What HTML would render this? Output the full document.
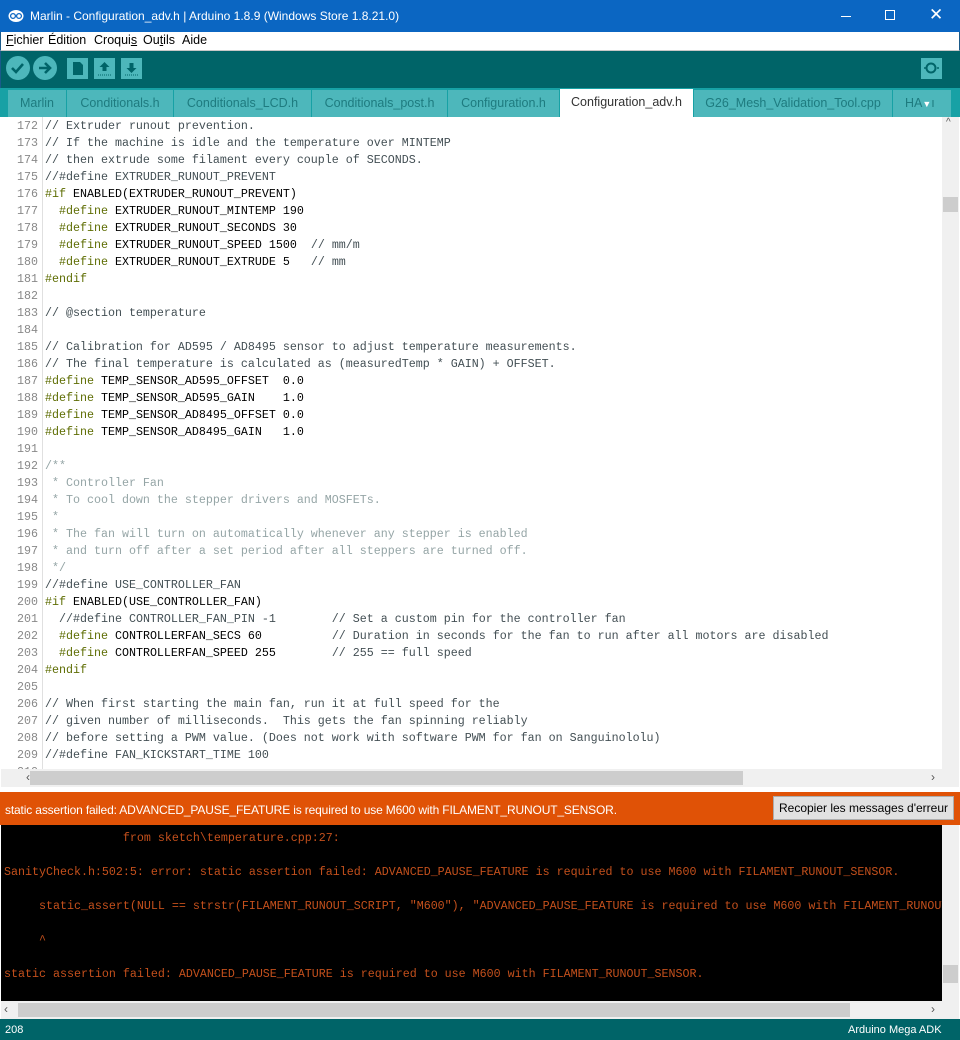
<!DOCTYPE html>
<html><head><meta charset="utf-8"><style>
*{margin:0;padding:0;box-sizing:border-box}
body{width:960px;height:1040px;overflow:hidden;background:#fff;font-family:"Liberation Sans",sans-serif;position:relative}
.abs{position:absolute}
#title{left:0;top:0;width:960px;height:32px;background:#0b66c2;color:#fff;font-size:12px}
#menu{left:0;top:32px;width:960px;height:19px;background:#fff;font-size:12.5px;border-bottom:1px solid #c8c8c8;border-left:1px solid #1a5a8a;border-right:1px solid #1a5a8a}
#menu span{position:absolute;top:1px}
#tool{left:0;top:51px;width:960px;height:37px;background:#006468;border-left:1px solid #1a5a8a}
#tabs{left:0;top:88px;width:960px;height:29px;background:#17a1a5}
.tab{position:absolute;top:2px;height:27px;background:#4db7bb;color:#1e7b7f;font-size:12.5px;text-align:center;line-height:26px;overflow:hidden}
.code{font-family:"Liberation Mono",monospace;font-size:11.67px;white-space:pre;line-height:17px}
.pp{color:#5e6d03}.cm{color:#434f54}.bc{color:#95a5a6}
#gut{left:1px;top:117px;width:42px;height:652px;border-right:1px solid #e0e0e0;background:#fff;color:#888;text-align:right;padding-right:4px;padding-top:1px;overflow:hidden}
#src{left:45px;top:118px;color:#000}
#vs{left:942px;top:117px;width:17px;height:652px;background:#f0f0f0}
#hs{left:1px;top:769px;width:958px;height:18px;background:#f0f0f0}
#err{left:0;top:792px;width:960px;height:33px;background:#e05206;color:#fff;font-size:12px}
#con{left:1px;top:825px;width:941px;height:176px;background:#000;color:#c4501c;overflow:hidden}
#status{left:0;top:1019px;width:960px;height:21px;background:#006468;color:#fff;font-size:11px}
</style></head><body>
<div id="title" class="abs">
 <svg class="abs" style="left:8px;top:9px" width="16" height="14" viewBox="0 0 16 14"><ellipse cx="8" cy="7" rx="7.5" ry="6" fill="#fff"/><circle cx="5" cy="7" r="2.4" fill="none" stroke="#0b66c2" stroke-width="1.3"/><circle cx="11" cy="7" r="2.4" fill="none" stroke="#0b66c2" stroke-width="1.3"/></svg>
 <span class="abs" style="left:30px;top:9px">Marlin - Configuration_adv.h | Arduino 1.8.9 (Windows Store 1.8.21.0)</span>
 <div class="abs" style="left:841px;top:16px;width:10px;height:1px;background:#fff"></div>
 <div class="abs" style="left:885px;top:10px;width:10px;height:10px;border:1px solid #fff"></div>
 <span class="abs" style="left:929px;top:5px;font-size:17px">✕</span>
</div>
<div id="menu" class="abs">
 <span style="left:5px"><u>F</u>ichier</span><span style="left:47px">Édition</span><span style="left:93px">Croqui<u>s</u></span><span style="left:142px">Ou<u>t</u>ils</span><span style="left:181px">Aide</span>
</div>
<div id="tool" class="abs">
 <svg width="960" height="37">
  <circle cx="17" cy="17" r="12" fill="#4db7bb"/><path d="M11 17l4 4 7-8" stroke="#006468" stroke-width="2.6" fill="none"/>
  <circle cx="44" cy="17" r="12" fill="#4db7bb"/><path d="M38 17h10M44 12l5 5-5 5" stroke="#006468" stroke-width="2.6" fill="none"/>
  <rect x="66" y="7" width="21" height="21" fill="#4db7bb"/><path d="M72 11h7l3 3v10h-10z" fill="#006468"/>
  <rect x="93" y="7" width="21" height="21" fill="#4db7bb"/><path d="M103.5 11l-5 5h3v4h4v-4h3z" fill="#006468"/><path d="M97 24h14" stroke="#006468" stroke-dasharray="1 1"/>
  <rect x="120" y="7" width="21" height="21" fill="#4db7bb"/><path d="M130.5 22l-5-5h3v-5h4v5h3z" fill="#006468"/><path d="M124 24h14" stroke="#006468" stroke-dasharray="1 1"/>
  <rect x="920" y="7" width="21" height="21" fill="#4db7bb"/><circle cx="930" cy="17" r="4.5" fill="none" stroke="#006468" stroke-width="2"/><path d="M925 17h-2M936 17h2" stroke="#006468" stroke-width="1.5"/>
 </svg>
</div>
<div id="tabs" class="abs">
 <div class="tab" style="left:8px;width:58px">Marlin</div>
 <div class="tab" style="left:67px;width:106px">Conditionals.h</div>
 <div class="tab" style="left:174px;width:137px">Conditionals_LCD.h</div>
 <div class="tab" style="left:312px;width:135px">Conditionals_post.h</div>
 <div class="tab" style="left:448px;width:111px">Configuration.h</div>
 <div class="tab" style="left:560px;width:133px;background:#fff;color:#333;top:1px;height:28px">Configuration_adv.h</div>
 <div class="tab" style="left:694px;width:198px">G26_Mesh_Validation_Tool.cpp</div>
 <div class="tab" style="left:893px;width:58px;text-align:left;padding-left:12px">HA<span style="font-size:9px;color:#fff">▼</span>ı</div>
</div>
<div id="gut" class="abs code">172
173
174
175
176
177
178
179
180
181
182
183
184
185
186
187
188
189
190
191
192
193
194
195
196
197
198
199
200
201
202
203
204
205
206
207
208
209
210</div>
<div id="src" class="abs code"><span class="cm">// Extruder runout prevention.</span>
<span class="cm">// If the machine is idle and the temperature over MINTEMP</span>
<span class="cm">// then extrude some filament every couple of SECONDS.</span>
<span class="cm">//#define EXTRUDER_RUNOUT_PREVENT</span>
<span class="pp">#if</span> ENABLED(EXTRUDER_RUNOUT_PREVENT)
  <span class="pp">#define</span> EXTRUDER_RUNOUT_MINTEMP 190
  <span class="pp">#define</span> EXTRUDER_RUNOUT_SECONDS 30
  <span class="pp">#define</span> EXTRUDER_RUNOUT_SPEED 1500  <span class="cm">// mm/m</span>
  <span class="pp">#define</span> EXTRUDER_RUNOUT_EXTRUDE 5   <span class="cm">// mm</span>
<span class="pp">#endif</span>

<span class="cm">// @section temperature</span>

<span class="cm">// Calibration for AD595 / AD8495 sensor to adjust temperature measurements.</span>
<span class="cm">// The final temperature is calculated as (measuredTemp * GAIN) + OFFSET.</span>
<span class="pp">#define</span> TEMP_SENSOR_AD595_OFFSET  0.0
<span class="pp">#define</span> TEMP_SENSOR_AD595_GAIN    1.0
<span class="pp">#define</span> TEMP_SENSOR_AD8495_OFFSET 0.0
<span class="pp">#define</span> TEMP_SENSOR_AD8495_GAIN   1.0

<span class="bc">/**
 * Controller Fan
 * To cool down the stepper drivers and MOSFETs.
 *
 * The fan will turn on automatically whenever any stepper is enabled
 * and turn off after a set period after all steppers are turned off.
 */</span>
<span class="cm">//#define USE_CONTROLLER_FAN</span>
<span class="pp">#if</span> ENABLED(USE_CONTROLLER_FAN)
  <span class="cm">//#define CONTROLLER_FAN_PIN -1        // Set a custom pin for the controller fan</span>
  <span class="pp">#define</span> CONTROLLERFAN_SECS 60          <span class="cm">// Duration in seconds for the fan to run after all motors are disabled</span>
  <span class="pp">#define</span> CONTROLLERFAN_SPEED 255        <span class="cm">// 255 == full speed</span>
<span class="pp">#endif</span>

<span class="cm">// When first starting the main fan, run it at full speed for the</span>
<span class="cm">// given number of milliseconds.  This gets the fan spinning reliably</span>
<span class="cm">// before setting a PWM value. (Does not work with software PWM for fan on Sanguinololu)</span>
<span class="cm">//#define FAN_KICKSTART_TIME 100</span></div>
<div id="vs" class="abs"><span class="abs" style="left:4px;top:0;font-size:10px;color:#555">^</span><div class="abs" style="left:1px;top:80px;width:15px;height:15px;background:#cdcdcd"></div></div>
<div id="hs" class="abs"><span class="abs" style="left:25px;top:1px;font-size:12px;color:#555">‹</span><div class="abs" style="left:29px;top:2px;width:713px;height:14px;background:#cdcdcd"></div><span class="abs" style="left:930px;top:1px;font-size:12px;color:#555">›</span></div>
<div id="err" class="abs"><span class="abs" style="left:5px;top:11px;letter-spacing:-0.15px">static assertion failed: ADVANCED_PAUSE_FEATURE is required to use M600 with FILAMENT_RUNOUT_SENSOR.</span>
 <div class="abs" style="left:773px;top:4px;width:181px;height:24px;background:#e1e1e1;border:1px solid #adadad;color:#000;font-size:12px;text-align:center;line-height:22px">Recopier les messages d'erreur</div></div>
<div id="con" class="abs code" style="line-height:34px;padding-left:3px"><div style="margin-top:-4px">                 from sketch\temperature.cpp:27:
SanityCheck.h:502:5: error: static assertion failed: ADVANCED_PAUSE_FEATURE is required to use M600 with FILAMENT_RUNOUT_SENSOR.
     static_assert(NULL == strstr(FILAMENT_RUNOUT_SCRIPT, "M600"), "ADVANCED_PAUSE_FEATURE is required to use M600 with FILAMENT_RUNOUT_SENSOR.");
     ^
static assertion failed: ADVANCED_PAUSE_FEATURE is required to use M600 with FILAMENT_RUNOUT_SENSOR.</div></div>
<div class="abs" style="left:942px;top:825px;width:17px;height:176px;background:#f0f0f0"><div class="abs" style="left:1px;top:140px;width:15px;height:18px;background:#cdcdcd"></div></div>
<div class="abs" style="left:1px;top:1001px;width:958px;height:18px;background:#f0f0f0"><span class="abs" style="left:3px;top:1px;font-size:12px;color:#555">‹</span><div class="abs" style="left:17px;top:2px;width:832px;height:14px;background:#cdcdcd"></div><span class="abs" style="left:930px;top:1px;font-size:12px;color:#555">›</span></div>
<div id="status" class="abs"><span class="abs" style="left:5px;top:5px">208</span><span class="abs" style="left:848px;top:5px">Arduino Mega ADK</span></div>
</body></html>
